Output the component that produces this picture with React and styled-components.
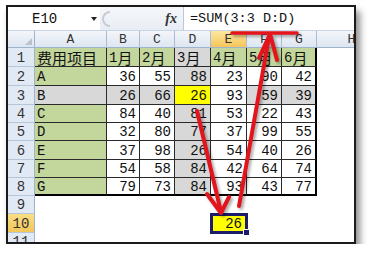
import React from "react";
import styled, { createGlobalStyle } from "styled-components";

const GlobalStyle = createGlobalStyle`
  body {
    margin: 0;
    background: #fff;
  }
`;

const Frame = styled.div`
  position: relative;
  margin: 5px 0 0 6px;
  width: 346px;
  height: 235px;
  border: 2px solid #1b1b1b;
  overflow: hidden;
  background: #fff;
  box-shadow: 4px 6px 7px rgba(0, 0, 0, 0.45);
  font-family: "Liberation Mono", "Noto Sans CJK SC", monospace;
  color: #111;
`;

const FormulaBar = styled.div`
  display: flex;
  height: 23px;
  border-bottom: 1px solid #c9d5e4;
  background: linear-gradient(#f5f7fa, #e8edf4);
`;

const NameBox = styled.div`
  width: 92px;
  display: flex;
  align-items: center;
  padding-left: 24px;
  box-sizing: border-box;
  background: #fff;
  font-size: 14px;
`;

const Caret = styled.span`
  margin-left: auto;
  margin-right: 3px;
  width: 0;
  height: 0;
  border-left: 3.5px solid transparent;
  border-right: 3.5px solid transparent;
  border-top: 4px solid #222;
`;

const Middle = styled.div`
  width: 83px;
  display: flex;
  align-items: center;
  justify-content: space-between;
  padding: 0 6px 0 2px;
  box-sizing: border-box;
`;

const Fx = styled.span`
  font-family: "Liberation Serif", serif;
  font-style: italic;
  font-weight: bold;
  font-size: 14px;
  color: #333;
`;

const FormulaInput = styled.div`
  flex: 1;
  display: flex;
  align-items: center;
  padding-left: 6px;
  background: #fff;
  border-left: 1px solid #b9c9dc;
  font-size: 13.5px;
`;

const Sheet = styled.div`
  display: grid;
  grid-template-columns: 27px 72px 33px 35px 36px 36px 35px 35px 70px;
  grid-template-rows: 17px 19px 19px 19px 18px 18px 19px 18px 18px 18px 19px 18px;
`;

const Corner = styled.div`
  position: relative;
  background: linear-gradient(#f3f6fa, #dde6f1);
  border-right: 1px solid #9eb3cc;
  border-bottom: 1px solid #9eb3cc;
  &::after {
    content: "";
    position: absolute;
    right: 2px;
    bottom: 2px;
    border-left: 7px solid transparent;
    border-bottom: 7px solid #b9c2cc;
  }
`;

const ColHead = styled.div`
  display: flex;
  align-items: center;
  justify-content: center;
  font-size: 13px;
  color: #333;
  background: ${(p) =>
    p.$active
      ? "linear-gradient(#fde7a0, #f4c659)"
      : "linear-gradient(#f3f6fa, #dde6f1)"};
  border-right: 1px solid #aabcd2;
  border-bottom: 1px solid #9eb3cc;
`;

const RowHead = styled.div`
  display: flex;
  align-items: center;
  justify-content: center;
  padding-top: 1px;
  font-size: 14px;
  color: #333;
  background: ${(p) =>
    p.$active ? "linear-gradient(#fbde85, #f3c65a)" : "#e1e9f4"};
  border-right: 1px solid #9eb3cc;
  border-bottom: 1px solid #b6c6da;
`;

const Cell = styled.div`
  display: flex;
  align-items: center;
  justify-content: ${(p) => (p.$num ? "flex-end" : "flex-start")};
  padding: 1px 3px 0 2px;
  font-size: 14px;
  overflow: hidden;
  white-space: nowrap;
  background: ${(p) => p.$bg || "#fff"};
  border-right: ${(p) => (p.$table ? (p.$edgeR ? "2px solid #000" : "1px solid #2a2a2a") : "none")};
  border-bottom: ${(p) => (p.$table ? (p.$edgeB ? "2px solid #000" : "1px solid #2a2a2a") : "none")};
`;

const Cjk = styled.span`
  font-family: "Noto Sans CJK SC", sans-serif;
  font-size: 15px;
`;

const ActiveCell = styled.div`
  position: relative;
  margin: -1px;
  display: flex;
  align-items: center;
  justify-content: flex-end;
  padding: 1px 3px 0 0;
  font-size: 14px;
  background: #ffff00;
  border: 3px solid #1d1d6b;
  &::after {
    content: "";
    position: absolute;
    right: -5px;
    bottom: -5px;
    width: 5px;
    height: 5px;
    background: #1d1d6b;
    border: 1px solid #fff;
  }
`;

const ArrowLayer = styled.svg`
  position: absolute;
  left: -8px;
  top: -7px;
  pointer-events: none;
  filter: drop-shadow(2px 2px 1.5px rgba(0, 0, 0, 0.35));
`;

const GREEN = "#c3d69b";
const GRAY = "#d8d8d8";
const YELLOW = "#ffff00";

const cols = ["A", "B", "C", "D", "E", "F", "G", "H"];

const data = [
  ["费用项目", "1月", "2月", "3月", "4月", "5月", "6月"],
  ["A", 36, 55, 88, 23, 90, 42],
  ["B", 26, 66, 26, 93, 59, 39],
  ["C", 84, 40, 81, 53, 22, 43],
  ["D", 32, 80, 77, 37, 99, 55],
  ["E", 37, 98, 26, 54, 40, 26],
  ["F", 54, 58, 84, 42, 64, 74],
  ["G", 79, 73, 84, 93, 43, 77],
];

const fillFor = (r, c) => {
  if (r === 0) return c === 3 ? GRAY : GREEN;
  if (r === 2) {
    if (c === 3) return YELLOW;
    if (c === 4) return "#fff";
    return GRAY;
  }
  if (c === 0) return GREEN;
  if (c === 3) return GRAY;
  return "#fff";
};

const renderText = (v) => {
  if (typeof v === "number") return v;
  const m = String(v).match(/^(\d*)(.*)$/);
  if (/[\u4e00-\u9fff]/.test(v)) {
    return (
      <>
        {m[1]}
        <Cjk>{m[2]}</Cjk>
      </>
    );
  }
  return v;
};

const App = () => {
  const rows = [];
  for (let r = 1; r <= 11; r++) {
    const row = data[r - 1];
    rows.push(
      <RowHead key={"h" + r} $active={r === 10}>
        {r}
      </RowHead>
    );
    cols.forEach((col, c) => {
      const key = col + r;
      if (r === 10 && col === "E") {
        rows.push(<ActiveCell key={key}>26</ActiveCell>);
        return;
      }
      if (row && c < 7) {
        rows.push(
          <Cell
            key={key}
            $table
            $bg={fillFor(r - 1, c)}
            $num={typeof row[c] === "number"}
            $edgeR={c === 6}
            $edgeB={r === 8}
          >
            {renderText(row[c])}
          </Cell>
        );
      } else {
        rows.push(<Cell key={key} />);
      }
    });
  }

  return (
    <>
      <GlobalStyle />
      <Frame>
        <FormulaBar>
          <NameBox>
            E10
            <Caret />
          </NameBox>
          <Middle>
            <svg width="10" height="18" viewBox="0 0 10 18">
              <path
                d="M8 2 A7 7 0 0 0 8 16"
                fill="none"
                stroke="#c8ccd2"
                strokeWidth="2"
              />
            </svg>
            <Fx>fx</Fx>
          </Middle>
          <FormulaInput>=SUM(3:3 D:D)</FormulaInput>
        </FormulaBar>
        <Sheet>
          <Corner />
          {cols.map((col) => (
            <ColHead key={col} $active={col === "E"}>
              {col}
            </ColHead>
          ))}
          {rows}
        </Sheet>
        <ArrowLayer width="371" height="260" viewBox="0 0 371 260">
          <g stroke="#e3141b" strokeWidth="4" strokeLinecap="round" fill="none">
            <line x1="232" y1="33" x2="297" y2="33" strokeWidth="3.5" />
            <line x1="197" y1="111" x2="221" y2="212" />
            <polyline points="207,194 221,213 229,197" strokeLinejoin="round" />
            <line x1="239" y1="206" x2="269" y2="37" />
            <polyline points="259,58 270,34 277,60" strokeLinejoin="round" />
          </g>
        </ArrowLayer>
      </Frame>
    </>
  );
};

export default App;
